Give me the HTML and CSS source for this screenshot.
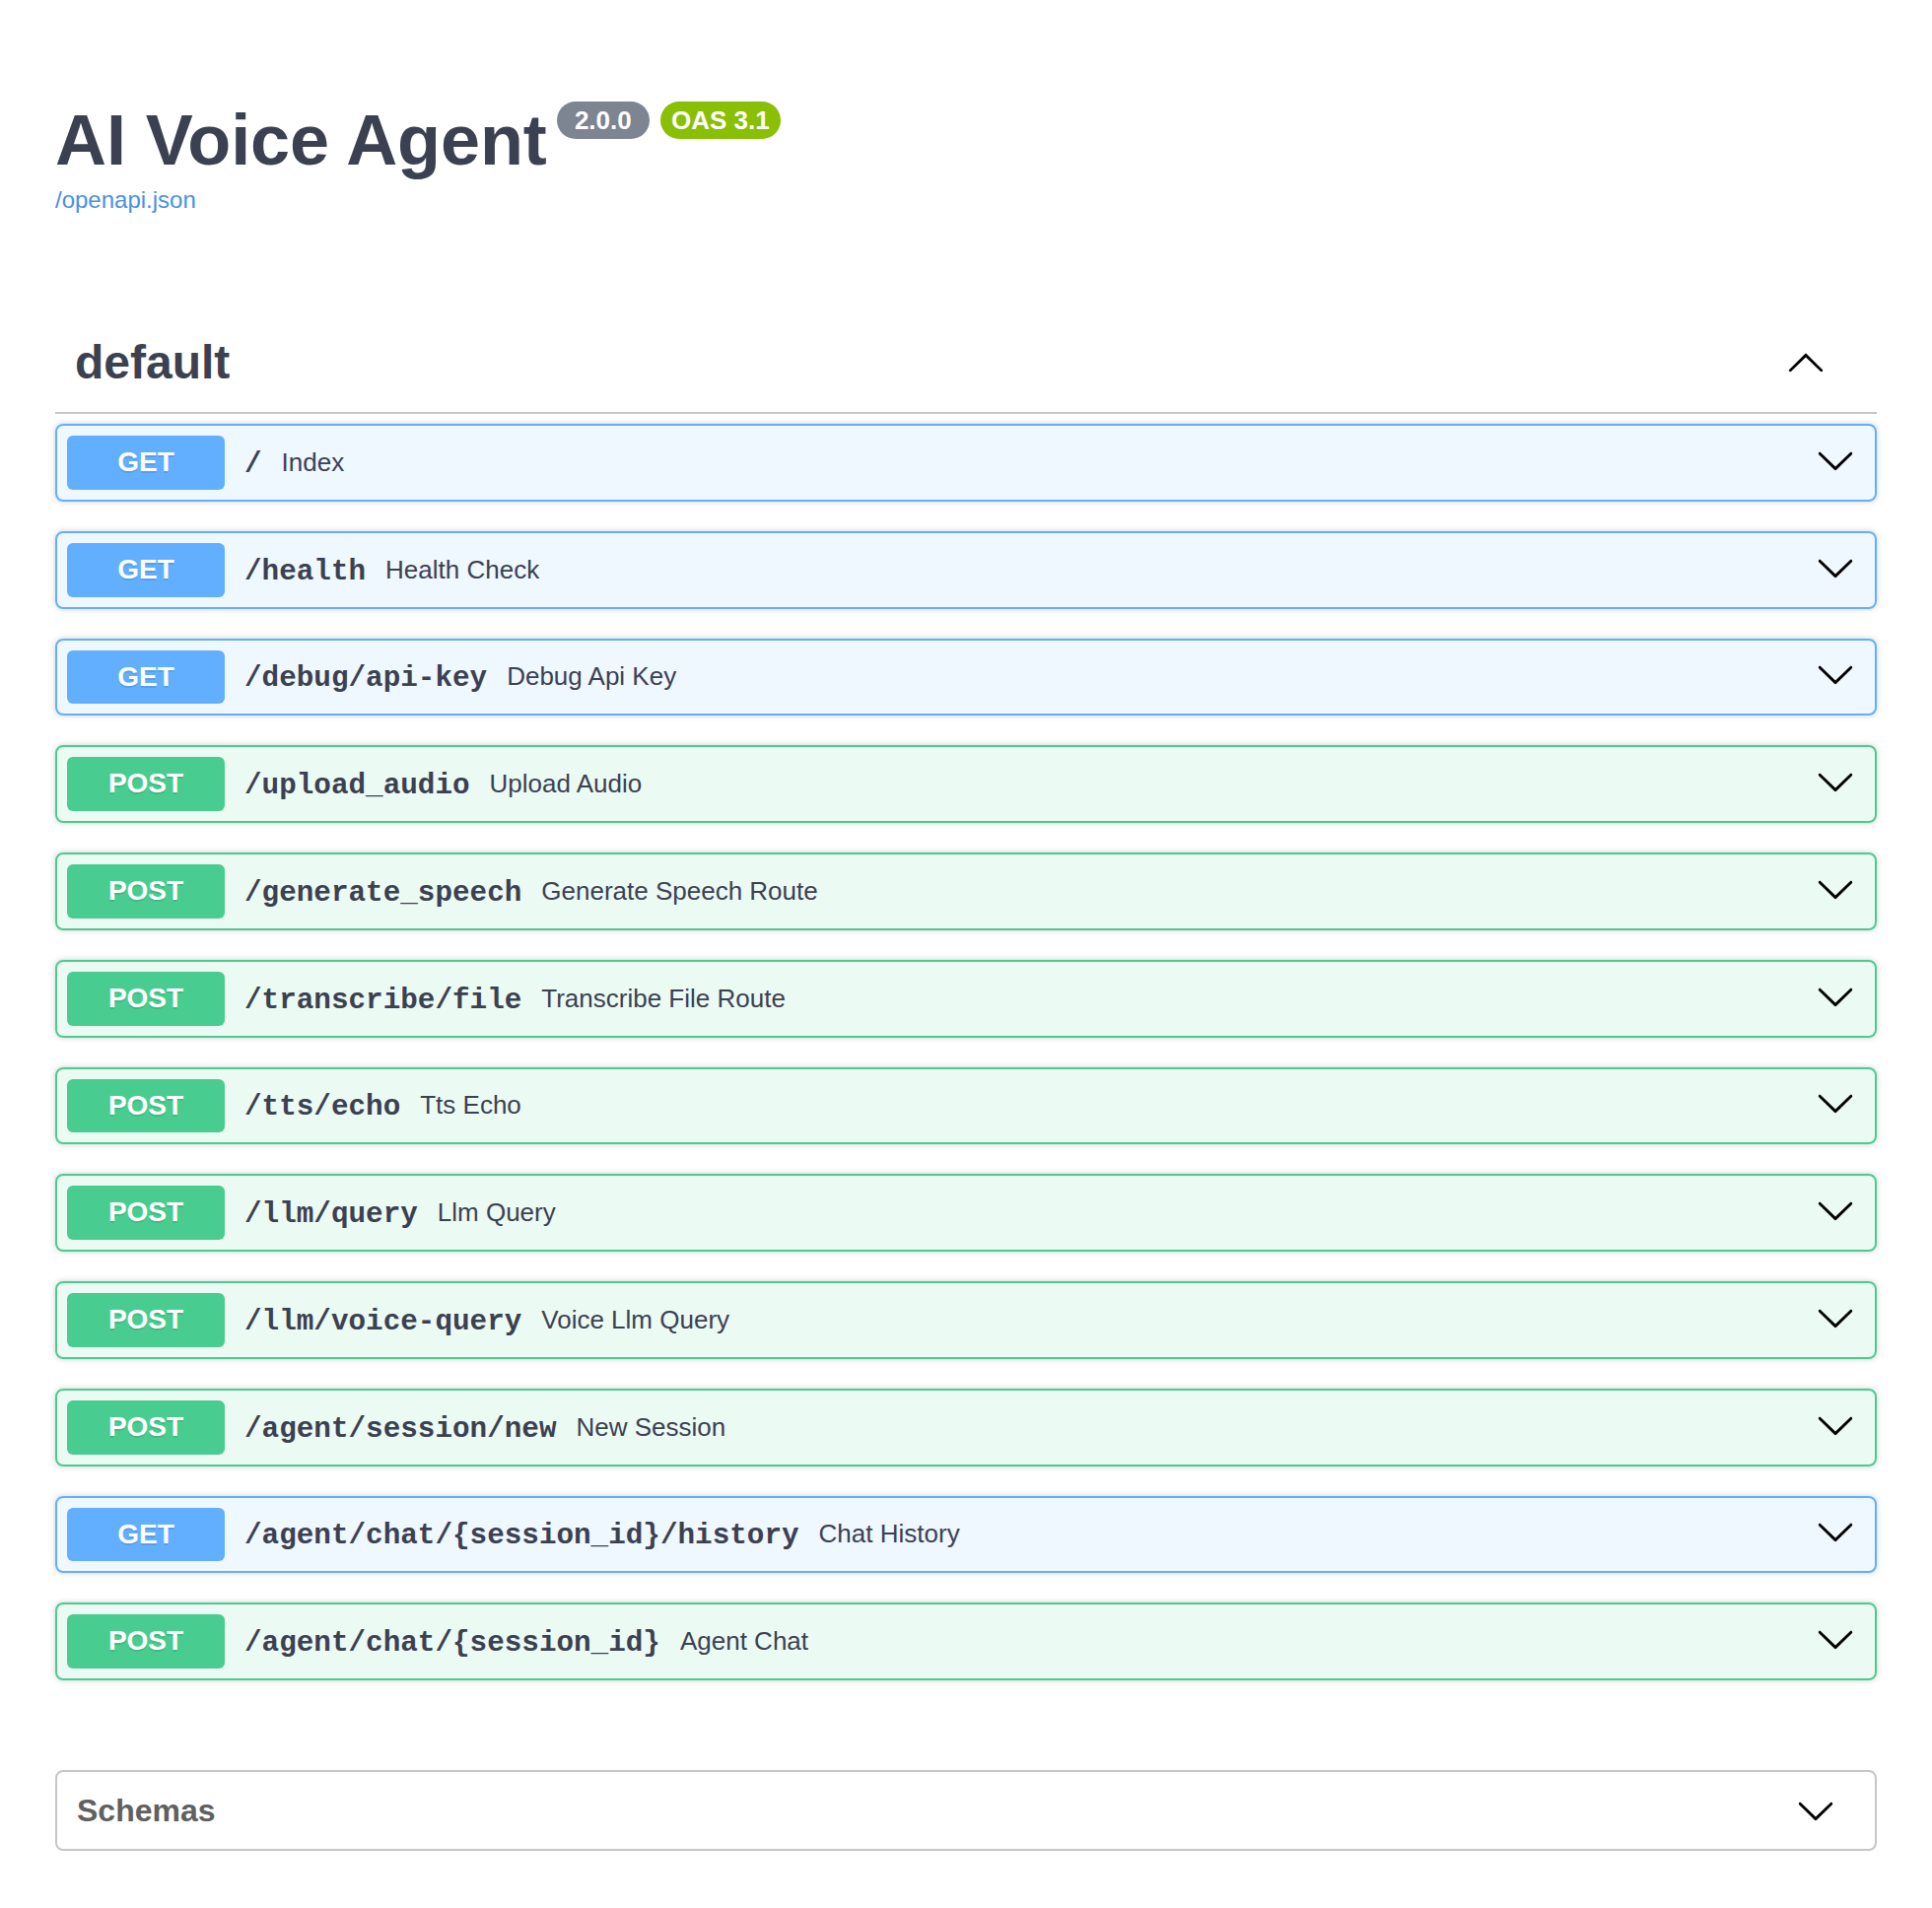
FILE: index.html
```html
<!DOCTYPE html>
<html lang="en">
<head>
<meta charset="utf-8">
<title>AI Voice Agent - Swagger UI</title>
<link rel="stylesheet" href="styles.css">
</head>
<body>
<div class="page">
  <header class="info">
    <h2 class="title">AI Voice Agent<span class="badge badge-version"> 2.0.0 </span><span class="badge badge-oas">OAS 3.1</span></h2>
    <a class="spec-link" href="#">/openapi.json</a>
  </header>

  <section class="tag-section">
    <h3 class="tag-header">
      <span class="tag-name">default</span>
      <button class="expand-btn" type="button" aria-label="Collapse operation">
        <svg class="arrow" width="40" height="40" viewBox="0 0 20 20"><path d="M17.418 14.908c.272.268.709.268.979 0s.271-.701 0-.969l-7.908-7.83c-.27-.268-.707-.268-.979 0l-7.908 7.83c-.27.268-.27.701 0 .969.271.268.709.268.979 0L10 7.767l7.418 7.141z"/></svg>
      </button>
    </h3>

    <div class="ops">
      <div class="opblock opblock-get"><div class="summary"><span class="method">GET</span><span class="path">/</span><span class="desc">Index</span><button class="arrow-btn" type="button"><svg class="arrow" width="40" height="40" viewBox="0 0 20 20"><path d="M17.418 6.109c.272-.268.709-.268.979 0s.271.701 0 .969l-7.908 7.83c-.27.268-.707.268-.979 0l-7.908-7.83c-.27-.268-.27-.701 0-.969.271-.268.709-.268.979 0L10 13.25l7.418-7.141z"/></svg></button></div></div>

      <div class="opblock opblock-get"><div class="summary"><span class="method">GET</span><span class="path">/health</span><span class="desc">Health Check</span><button class="arrow-btn" type="button"><svg class="arrow" width="40" height="40" viewBox="0 0 20 20"><path d="M17.418 6.109c.272-.268.709-.268.979 0s.271.701 0 .969l-7.908 7.83c-.27.268-.707.268-.979 0l-7.908-7.83c-.27-.268-.27-.701 0-.969.271-.268.709-.268.979 0L10 13.25l7.418-7.141z"/></svg></button></div></div>

      <div class="opblock opblock-get"><div class="summary"><span class="method">GET</span><span class="path">/debug/api-key</span><span class="desc">Debug Api Key</span><button class="arrow-btn" type="button"><svg class="arrow" width="40" height="40" viewBox="0 0 20 20"><path d="M17.418 6.109c.272-.268.709-.268.979 0s.271.701 0 .969l-7.908 7.83c-.27.268-.707.268-.979 0l-7.908-7.83c-.27-.268-.27-.701 0-.969.271-.268.709-.268.979 0L10 13.25l7.418-7.141z"/></svg></button></div></div>

      <div class="opblock opblock-post"><div class="summary"><span class="method">POST</span><span class="path">/upload_audio</span><span class="desc">Upload Audio</span><button class="arrow-btn" type="button"><svg class="arrow" width="40" height="40" viewBox="0 0 20 20"><path d="M17.418 6.109c.272-.268.709-.268.979 0s.271.701 0 .969l-7.908 7.83c-.27.268-.707.268-.979 0l-7.908-7.83c-.27-.268-.27-.701 0-.969.271-.268.709-.268.979 0L10 13.25l7.418-7.141z"/></svg></button></div></div>

      <div class="opblock opblock-post"><div class="summary"><span class="method">POST</span><span class="path">/generate_speech</span><span class="desc">Generate Speech Route</span><button class="arrow-btn" type="button"><svg class="arrow" width="40" height="40" viewBox="0 0 20 20"><path d="M17.418 6.109c.272-.268.709-.268.979 0s.271.701 0 .969l-7.908 7.83c-.27.268-.707.268-.979 0l-7.908-7.83c-.27-.268-.27-.701 0-.969.271-.268.709-.268.979 0L10 13.25l7.418-7.141z"/></svg></button></div></div>

      <div class="opblock opblock-post"><div class="summary"><span class="method">POST</span><span class="path">/transcribe/file</span><span class="desc">Transcribe File Route</span><button class="arrow-btn" type="button"><svg class="arrow" width="40" height="40" viewBox="0 0 20 20"><path d="M17.418 6.109c.272-.268.709-.268.979 0s.271.701 0 .969l-7.908 7.83c-.27.268-.707.268-.979 0l-7.908-7.83c-.27-.268-.27-.701 0-.969.271-.268.709-.268.979 0L10 13.25l7.418-7.141z"/></svg></button></div></div>

      <div class="opblock opblock-post"><div class="summary"><span class="method">POST</span><span class="path">/tts/echo</span><span class="desc">Tts Echo</span><button class="arrow-btn" type="button"><svg class="arrow" width="40" height="40" viewBox="0 0 20 20"><path d="M17.418 6.109c.272-.268.709-.268.979 0s.271.701 0 .969l-7.908 7.83c-.27.268-.707.268-.979 0l-7.908-7.83c-.27-.268-.27-.701 0-.969.271-.268.709-.268.979 0L10 13.25l7.418-7.141z"/></svg></button></div></div>

      <div class="opblock opblock-post"><div class="summary"><span class="method">POST</span><span class="path">/llm/query</span><span class="desc">Llm Query</span><button class="arrow-btn" type="button"><svg class="arrow" width="40" height="40" viewBox="0 0 20 20"><path d="M17.418 6.109c.272-.268.709-.268.979 0s.271.701 0 .969l-7.908 7.83c-.27.268-.707.268-.979 0l-7.908-7.83c-.27-.268-.27-.701 0-.969.271-.268.709-.268.979 0L10 13.25l7.418-7.141z"/></svg></button></div></div>

      <div class="opblock opblock-post"><div class="summary"><span class="method">POST</span><span class="path">/llm/voice-query</span><span class="desc">Voice Llm Query</span><button class="arrow-btn" type="button"><svg class="arrow" width="40" height="40" viewBox="0 0 20 20"><path d="M17.418 6.109c.272-.268.709-.268.979 0s.271.701 0 .969l-7.908 7.83c-.27.268-.707.268-.979 0l-7.908-7.83c-.27-.268-.27-.701 0-.969.271-.268.709-.268.979 0L10 13.25l7.418-7.141z"/></svg></button></div></div>

      <div class="opblock opblock-post"><div class="summary"><span class="method">POST</span><span class="path">/agent/session/new</span><span class="desc">New Session</span><button class="arrow-btn" type="button"><svg class="arrow" width="40" height="40" viewBox="0 0 20 20"><path d="M17.418 6.109c.272-.268.709-.268.979 0s.271.701 0 .969l-7.908 7.83c-.27.268-.707.268-.979 0l-7.908-7.83c-.27-.268-.27-.701 0-.969.271-.268.709-.268.979 0L10 13.25l7.418-7.141z"/></svg></button></div></div>

      <div class="opblock opblock-get"><div class="summary"><span class="method">GET</span><span class="path">/agent/chat/{session_id}/history</span><span class="desc">Chat History</span><button class="arrow-btn" type="button"><svg class="arrow" width="40" height="40" viewBox="0 0 20 20"><path d="M17.418 6.109c.272-.268.709-.268.979 0s.271.701 0 .969l-7.908 7.83c-.27.268-.707.268-.979 0l-7.908-7.83c-.27-.268-.27-.701 0-.969.271-.268.709-.268.979 0L10 13.25l7.418-7.141z"/></svg></button></div></div>

      <div class="opblock opblock-post"><div class="summary"><span class="method">POST</span><span class="path">/agent/chat/{session_id}</span><span class="desc">Agent Chat</span><button class="arrow-btn" type="button"><svg class="arrow" width="40" height="40" viewBox="0 0 20 20"><path d="M17.418 6.109c.272-.268.709-.268.979 0s.271.701 0 .969l-7.908 7.83c-.27.268-.707.268-.979 0l-7.908-7.83c-.27-.268-.27-.701 0-.969.271-.268.709-.268.979 0L10 13.25l7.418-7.141z"/></svg></button></div></div>
    </div>
  </section>

  <section class="models">
    <h4 class="models-header">
      <span class="models-title">Schemas</span>
      <svg class="arrow" width="40" height="40" viewBox="0 0 20 20"><path d="M17.418 6.109c.272-.268.709-.268.979 0s.271.701 0 .969l-7.908 7.83c-.27.268-.707.268-.979 0l-7.908-7.830c-.27-.268-.27-.701 0-.969.271-.268.709-.268.979 0L10 13.25l7.418-7.141z"/></svg>
    </h4>
  </section>
</div>
</body>
</html>
```

FILE: styles.css
```css
html, body {
  margin: 0;
  padding: 0;
  background: #ffffff;
}

body {
  font-family: "Liberation Sans", Arial, sans-serif;
  color: #3b4151;
}

.page {
  padding: 0 56px 60px;
}

/* ---------- info header ---------- */
.info {
  padding-top: 101px;
}

.title {
  margin: 0;
  font-size: 72px;
  line-height: 82px;
  font-weight: 700;
  letter-spacing: -0.1px;
  color: #3b4151;
  white-space: nowrap;
}

.badge {
  display: inline-block;
  vertical-align: 36px;
  margin-left: 10px;
  padding: 4px 11px;
  border-radius: 114px;
  font-size: 26px;
  line-height: 30px;
  font-weight: 700;
  letter-spacing: 0;
  color: #ffffff;
  white-space: pre;
}

.badge-version {
  background: #7d8492;
  padding: 4px 11px;
}

.badge-oas {
  background: #89bf04;
  margin-left: 11px;
}

.spec-link {
  display: block;
  margin-top: 6px;
  font-size: 24px;
  line-height: 28px;
  color: #4990e2;
  text-decoration: none;
  width: max-content;
}

/* ---------- tag section ---------- */
.tag-section {
  margin-top: 106px;
}

.tag-header {
  display: flex;
  align-items: center;
  margin: 0 0 10px;
  padding: 17px 40px 23px 20px;
  border-bottom: 2px solid rgba(59, 65, 81, 0.3);
  font-size: 48px;
  font-weight: 700;
  color: #3b4151;
}

.tag-name {
  flex: 1 1 auto;
  line-height: 55px;
}

.expand-btn {
  display: flex;
  align-items: center;
  border: none;
  background: none;
  padding: 0 12px 2px;
  margin: 0;
  cursor: pointer;
}

.arrow-btn {
  display: flex;
  align-items: center;
  border: none;
  background: none;
  padding: 0 10px 5px 14px;
  margin: 0;
  cursor: pointer;
}

.arrow {
  display: block;
  fill: #000000;
}

/* ---------- operations ---------- */
.ops {
  display: flex;
  flex-direction: column;
  gap: 30px;
}

.opblock {
  border: 2px solid #000;
  border-radius: 8px;
  box-shadow: 0 0 6px rgba(0, 0, 0, 0.19);
}

.opblock-get {
  background: rgba(97, 175, 254, 0.1);
  border-color: #61affe;
}

.opblock-post {
  background: rgba(73, 204, 144, 0.1);
  border-color: #49cc90;
}

.summary {
  display: flex;
  align-items: center;
  padding: 10px;
}

.method {
  min-width: 160px;
  padding: 12px 0;
  border-radius: 6px;
  font-size: 28px;
  line-height: 30.75px;
  font-weight: 700;
  text-align: center;
  color: #ffffff;
  text-shadow: 0 2px 0 rgba(0, 0, 0, 0.1);
}

.opblock-get .method {
  background: #61affe;
}

.opblock-post .method {
  background: #49cc90;
}

.path {
  padding: 4px 20px 0;
  font-family: "Liberation Mono", "DejaVu Sans Mono", monospace;
  font-size: 29.3px;
  font-weight: 700;
  color: #3b4151;
  white-space: nowrap;
}

.desc {
  flex: 1 1 auto;
  font-size: 26px;
  color: #3b4151;
}

/* ---------- schemas ---------- */
.models {
  margin-top: 91px;
  border: 2px solid rgba(59, 65, 81, 0.3);
  border-radius: 8px;
}

.models-header {
  display: flex;
  align-items: center;
  margin: 0;
  padding: 19px 40px 19px 20px;
  font-size: 32px;
  font-weight: 700;
  color: #606060;
}

.models-title {
  flex: 1 1 auto;
}
```
